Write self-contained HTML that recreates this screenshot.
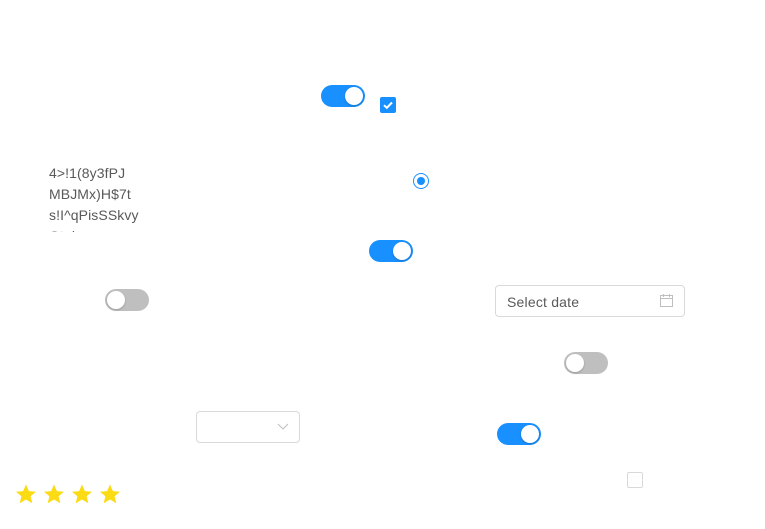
<!DOCTYPE html><html><head><style>
body{margin:0;width:765px;height:529px;background:#fff;position:relative;font-family:"Liberation Sans",sans-serif;overflow:hidden}
.a{position:absolute}
.sw{position:absolute;width:44px;height:22px;border-radius:11px;background:#1890ff}
.sw::after{content:"";position:absolute;top:2px;left:24px;width:18px;height:18px;border-radius:50%;background:#fff;box-shadow:0 1px 2px rgba(0,0,0,.2)}
.sw.off{background:#bfbfbf}
.sw.off::after{left:2px}
</style></head><body>
<div class="sw" style="left:321px;top:85px"></div>
<div class="a" style="left:380px;top:97px;width:16px;height:16px;background:#1890ff;border-radius:2px"><svg width="16" height="16"><path d="M4 8.2l2.8 2.6L12 5.5" stroke="#fff" stroke-width="2" fill="none"/></svg></div>
<div class="a" style="left:413px;top:173px;width:14px;height:14px;border:1px solid #1890ff;border-radius:50%"><div class="a" style="left:3px;top:3px;width:8px;height:8px;border-radius:50%;background:#1890ff"></div></div>
<div class="a" style="left:49px;top:163px;width:120px;height:69px;overflow:hidden;font-size:14px;line-height:21px;color:#595959;letter-spacing:0.1px">4&gt;!1(8y3fPJ<br>MBJMx)H$7t<br>s!I^qPisSSkvy<br>Gtel</div>
<div class="sw" style="left:369px;top:240px"></div>
<div class="sw off" style="left:105px;top:289px"></div>
<div class="a" style="left:495px;top:285px;width:188px;height:30px;border:1px solid #d9d9d9;border-radius:4px"><span class="a" style="left:11px;top:8px;font-size:14px;color:#595959;letter-spacing:0.2px">Select date</span><svg class="a" style="left:164px;top:8px" width="13" height="13"><rect x="0.5" y="1.5" width="12" height="11" fill="none" stroke="#bfbfbf"/><path d="M0.5 4.5h12M3.5 0v3M9.5 0v3" stroke="#bfbfbf"/></svg></div>
<div class="sw off" style="left:564px;top:352px"></div>
<div class="a" style="left:196px;top:411px;width:102px;height:30px;border:1px solid #d9d9d9;border-radius:4px"><svg class="a" style="left:80px;top:11px" width="12" height="8"><path d="M1 1l5 5 5-5" stroke="#bfbfbf" fill="none"/></svg></div>
<div class="sw" style="left:497px;top:423px"></div>
<div class="a" style="left:627px;top:472px;width:14px;height:14px;border:1px solid #d9d9d9;border-radius:2px"></div>
<svg class="a" style="left:14px;top:483px" width="112" height="24"><g fill="#fadb14">
<path id="s" d="M12 1.5l2.9 6.6 7.1.6-5.4 4.6 1.7 7L12 16.5l-6.3 3.8 1.7-7L2 8.7l7.1-.6z"/>
<use href="#s" x="28"/><use href="#s" x="56"/><use href="#s" x="84"/></g></svg>
</body></html>
